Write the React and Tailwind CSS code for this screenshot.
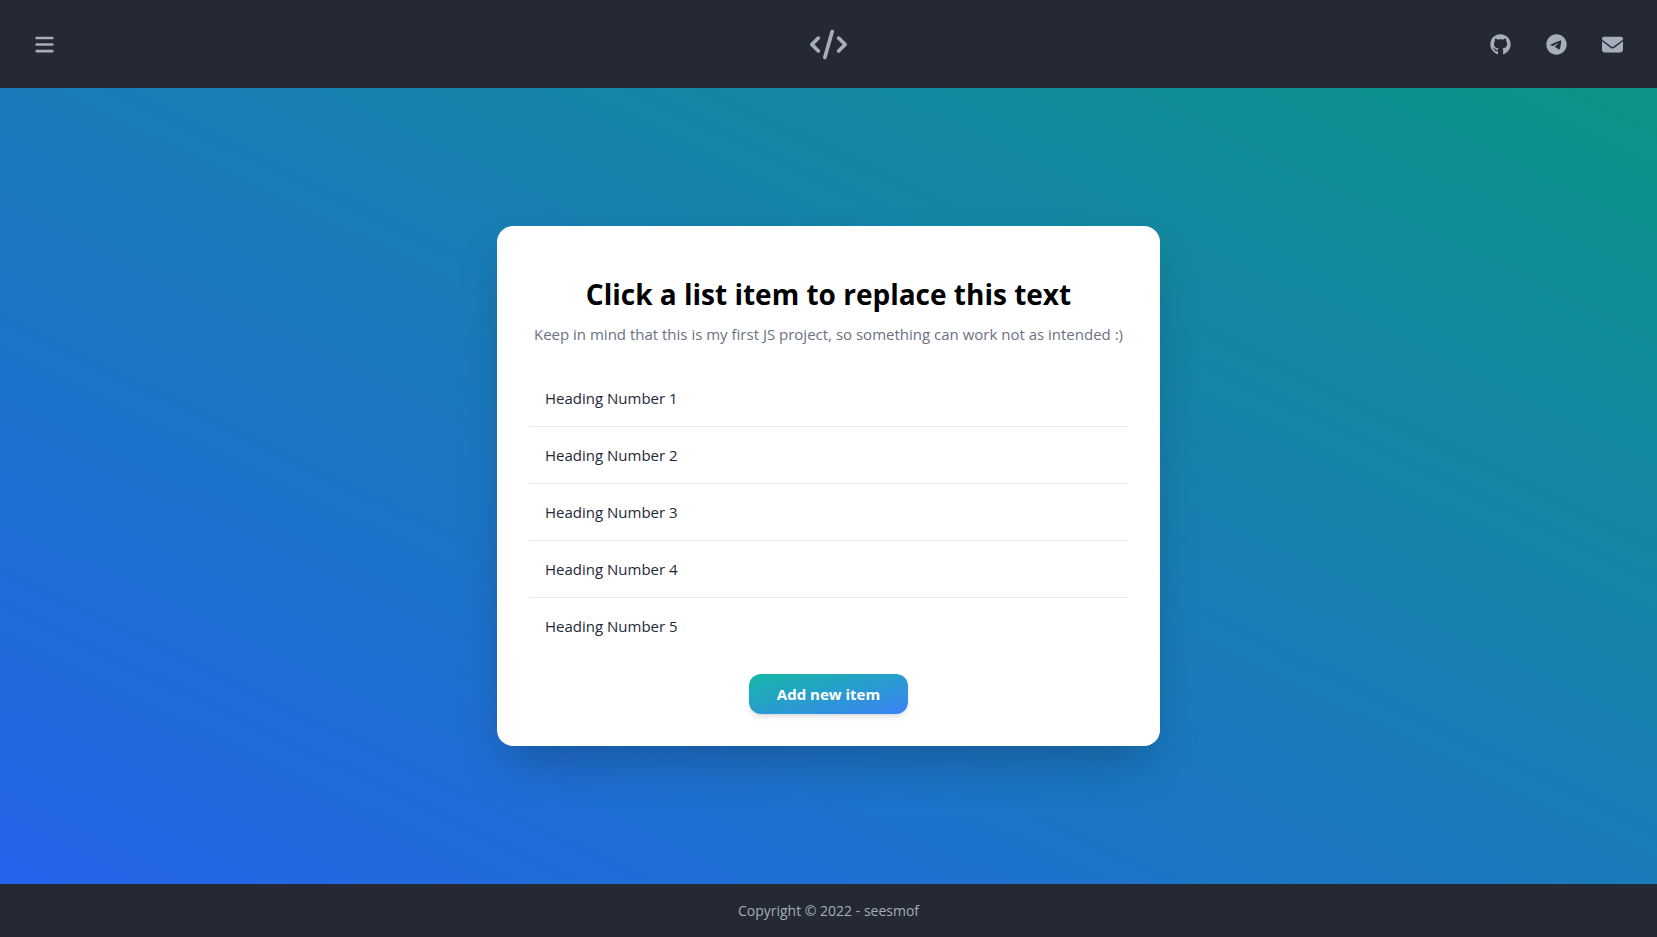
import { useState } from "react";
import { FaBars, FaCode, FaEnvelope, FaGithub, FaTelegram } from "react-icons/fa6";

const links = [
  { label: "GitHub", Icon: FaGithub },
  { label: "Telegram", Icon: FaTelegram },
  { label: "Email", Icon: FaEnvelope },
];

export default function App() {
  const [title, setTitle] = useState("Click a list item to replace this text");
  const [items, setItems] = useState([1, 2, 3, 4, 5].map((n) => `Heading Number ${n}`));

  return (
    <div className="flex min-h-screen flex-col bg-[#242933] font-['Open_Sans','Noto_Sans',sans-serif] text-[#a6adbb]">
      <header className="grid h-[88px] grid-cols-3 items-center px-3">
        <button type="button" aria-label="Menu" className="flex size-16 items-center justify-center">
          <FaBars size={21} />
        </button>
        <a href="#home" aria-label="Home" className="justify-self-center">
          <FaCode size={37} />
        </a>
        <nav className="flex justify-end gap-2 pr-2">
          {links.map(({ label, Icon }) => (
            <a key={label} href={`#${label.toLowerCase()}`} aria-label={label} className="flex h-16 w-12 items-center justify-center">
              <Icon size={21} />
            </a>
          ))}
        </nav>
      </header>

      <main className="flex grow items-center justify-center bg-[linear-gradient(to_top_right,#2563eb,#0d9488)] p-4">
        <section className="flex w-full max-w-[663px] flex-col items-center rounded-2xl bg-white px-8 pt-12 pb-8 shadow-2xl">
          <h1 className="text-center text-[28px] leading-10 font-bold text-black">{title}</h1>
          <p className="mt-2 text-center text-[15px] leading-6 text-gray-500">
            Keep in mind that this is my first JS project, so something can work not as intended :)
          </p>
          <ul className="mt-6 w-full divide-y divide-slate-200">
            {items.map((item) => (
              <li key={item}>
                <button type="button" onClick={() => setTitle(item)} className="w-full p-4 text-left text-[15px] leading-6 text-gray-800">
                  {item}
                </button>
              </li>
            ))}
          </ul>
          <button
            type="button"
            onClick={() => setItems([...items, `Heading Number ${items.length + 1}`])}
            className="mt-5 h-10 rounded-xl bg-[linear-gradient(to_bottom_right,#14b8a6,#3b82f6)] px-7 text-[15px] leading-6 font-bold text-white shadow-md"
          >
            Add new item
          </button>
        </section>
      </main>

      <footer className="flex h-[53px] items-center justify-center text-sm">
        <p>Copyright © 2022 - seesmof</p>
      </footer>
    </div>
  );
}
